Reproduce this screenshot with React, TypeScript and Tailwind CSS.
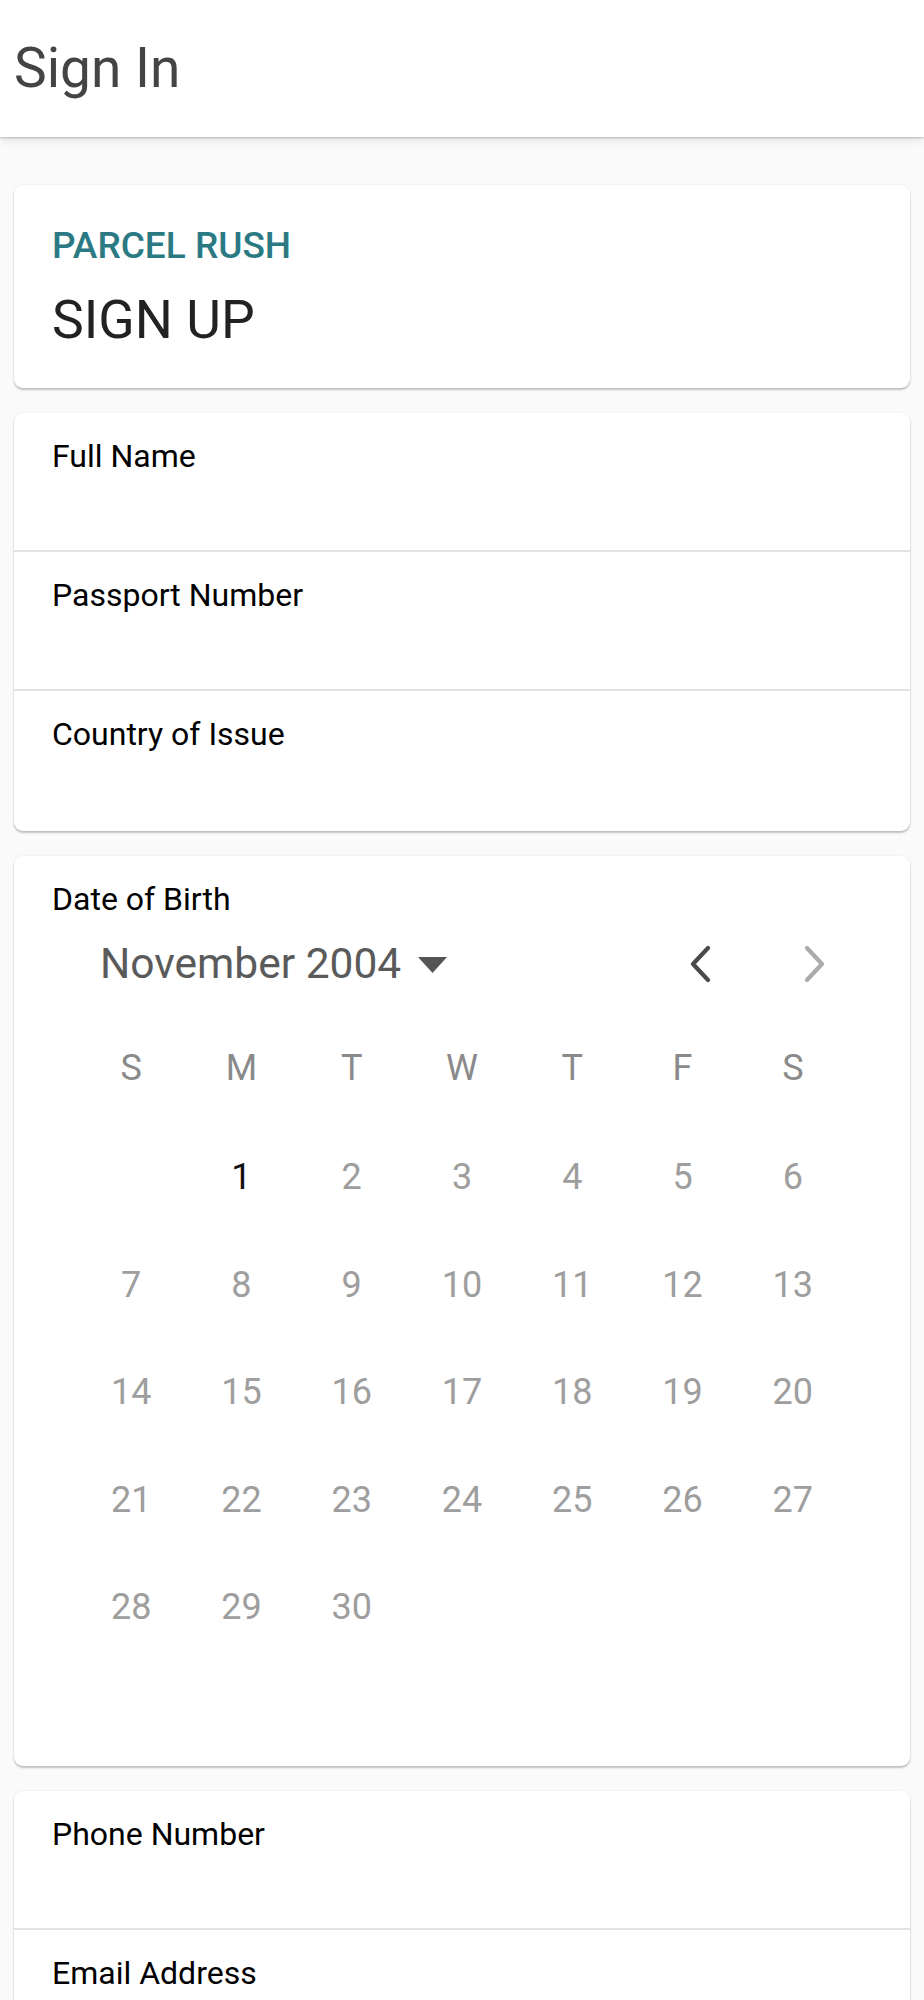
import React from 'react';

const WEEKDAYS = ['S', 'M', 'T', 'W', 'T', 'F', 'S'];

// November 2004 starts on a Monday
const DAYS: (number | null)[] = [
  null,
  ...Array.from({ length: 30 }, (_, i) => i + 1),
];
while (DAYS.length < 35) DAYS.push(null);

function FieldRow({ label, last }: { label: string; last?: boolean }) {
  return (
    <div
      className={
        last
          ? 'h-[140px] px-[38px] pt-[25px]'
          : 'h-[139px] border-b-2 border-[#e2e2e2] px-[38px] pt-[25px]'
      }
    >
      <span className="text-[32px] leading-[1.172] text-black">{label}</span>
    </div>
  );
}

function Card({ children, className = '' }: { children: React.ReactNode; className?: string }) {
  return (
    <div
      className={
        'rounded-[9px] bg-white shadow-[0_2px_2px_rgba(0,0,0,0.22),0_0_3px_rgba(0,0,0,0.07)] ' +
        className
      }
    >
      {children}
    </div>
  );
}

function Chevron({ dir, color }: { dir: 'left' | 'right'; color: string }) {
  const pts = dir === 'left' ? '20,3 5,19 20,35' : '4,3 19,19 4,35';
  return (
    <svg width="24" height="38" viewBox="0 0 24 38" fill="none">
      <polyline
        points={pts}
        stroke={color}
        strokeWidth="4.2"
        strokeLinecap="round"
        strokeLinejoin="round"
      />
    </svg>
  );
}

function Calendar() {
  return (
    <div className="pb-[105px]">
      <div className="mt-[10px] flex h-[70px] items-center justify-between">
        <div className="ml-[48px] flex items-center">
          <span className="text-[42.5px] leading-[1.172] text-[#5a5a5a]">November 2004</span>
          <svg className="ml-[17px] mt-[2px]" width="29" height="16" viewBox="0 0 29 16">
            <polygon points="0,0 29,0 14.5,16" fill="#555555" />
          </svg>
        </div>
        <div className="flex">
          <button type="button" className="flex h-[70px] w-[115px] items-center justify-center">
            <Chevron dir="left" color="#4a4a4a" />
          </button>
          <button type="button" className="flex h-[70px] w-[115px] items-center justify-center">
            <Chevron dir="right" color="#ababab" />
          </button>
        </div>
      </div>

      <div className="ml-[24px] mt-[15px] grid w-[772px] grid-cols-7">
        {WEEKDAYS.map((d, i) => (
          <div
            key={i}
            className="flex h-[110px] items-center justify-center text-[36px] leading-[1.172] text-[#8a8a8a]"
          >
            {d}
          </div>
        ))}
        {DAYS.map((d, i) => (
          <div
            key={'d' + i}
            className={
              'flex h-[107.5px] items-center justify-center text-[36px] leading-[1.172] ' +
              (d === 1 ? 'text-[#111]' : 'text-[#9e9e9e]')
            }
          >
            {d ?? ''}
          </div>
        ))}
      </div>
    </div>
  );
}

export default function App() {
  return (
    <div className="min-h-screen bg-[#fafafa] font-['Roboto',sans-serif]">
      <header className="relative z-10 flex h-[137px] items-center bg-white px-[14px] shadow-[0_1px_2px_rgba(0,0,0,0.22),0_4px_8px_rgba(0,0,0,0.08)]">
        <h1 className="text-[55px] leading-[1.172] text-[#444]">Sign In</h1>
      </header>

      <main className="flex flex-col gap-[25px] px-[14px] pt-[48px] pb-[40px]">
        <Card className="px-[38px] pt-[39px] pb-[36px]">
          <div className="text-[37px] font-medium leading-[1.172] text-[#2b7983]">
            PARCEL RUSH
          </div>
          <div className="mt-[22px] text-[53.5px] leading-[1.172] text-[#222]">SIGN UP</div>
        </Card>

        <Card>
          <FieldRow label="Full Name" />
          <FieldRow label="Passport Number" />
          <FieldRow label="Country of Issue" last />
        </Card>

        <Card>
          <div className="px-[38px] pt-[25px]">
            <span className="text-[32px] leading-[1.172] text-black">Date of Birth</span>
          </div>
          <div className="px-[38px]">
            <Calendar />
          </div>
        </Card>

        <Card>
          <FieldRow label="Phone Number" />
          <FieldRow label="Email Address" />
          <FieldRow label="Password" last />
        </Card>
      </main>
    </div>
  );
}
